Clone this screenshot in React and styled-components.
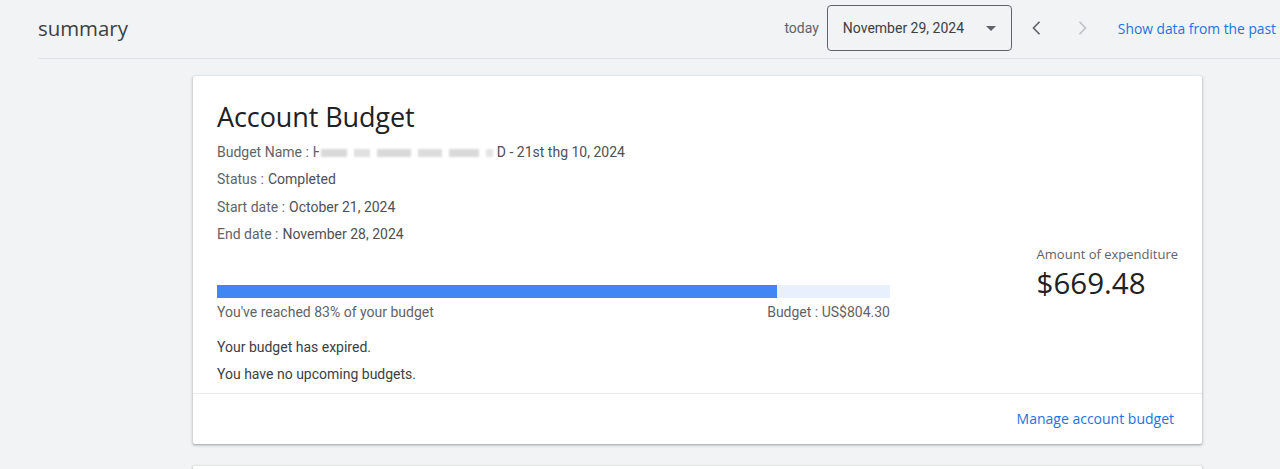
import React from "react";
import styled, { createGlobalStyle } from "styled-components";

const GlobalStyle = createGlobalStyle`
  html, body {
    margin: 0;
    padding: 0;
    background: #f1f3f4;
    font-family: Roboto, "Liberation Sans", Arial, sans-serif;
    color: #3c4043;
    overflow: hidden;
  }
  * { box-sizing: border-box; }
`;

const Page = styled.div`
  width: 1280px;
  height: 469px;
  overflow: hidden;
`;

const Header = styled.header`
  margin-left: 38px;
  height: 59px;
  border-bottom: 1px solid #dfe1e5;
  display: flex;
  align-items: center;
  white-space: nowrap;
  overflow: hidden;
`;

const PageTitle = styled.h1`
  margin: 0 0 2px;
  font-family: "Open Sans", Roboto, sans-serif;
  font-weight: 400;
  font-size: 20.4px;
  color: #3c4043;
`;

const Controls = styled.div`
  margin-left: auto;
  display: flex;
  align-items: center;
  padding-bottom: 2px;
`;

const TodayLabel = styled.span`
  font-size: 14px;
  color: #5f6368;
  margin-right: 8px;
`;

const DateSelect = styled.button`
  width: 185px;
  height: 46px;
  border: 1px solid #5f6368;
  border-radius: 4px;
  background: transparent;
  display: flex;
  align-items: center;
  padding: 0 15px;
  font-family: Roboto, sans-serif;
  font-size: 14px;
  color: #3c4043;
  cursor: pointer;
`;

const Caret = styled.span`
  margin-left: auto;
  width: 0;
  height: 0;
  border-left: 5px solid transparent;
  border-right: 5px solid transparent;
  border-top: 5px solid #5f6368;
`;

const NavButton = styled.button`
  width: 40px;
  height: 40px;
  border: none;
  background: transparent;
  display: flex;
  align-items: center;
  justify-content: center;
  padding: 0;
  margin-left: ${(p) => p.$gap || 0}px;
  color: ${(p) => (p.disabled ? "#bdc1c6" : "#5f6368")};
`;

const HeaderLink = styled.a`
  margin-left: 16px;
  font-family: "Open Sans", Roboto, sans-serif;
  font-size: 13.8px;
  color: #1a73e8;
  text-decoration: none;
  padding-right: 4px;
`;

const Content = styled.main`
  padding: 17px 78px 0 193px;
  display: flex;
  flex-direction: column;
  gap: 22px;
`;

const Card = styled.section`
  background: #fff;
  border-radius: 2px;
  box-shadow: 0 1px 2px rgba(60, 64, 67, 0.3), 0 1px 3px 1px rgba(60, 64, 67, 0.15);
  min-height: ${(p) => p.$minHeight || 0}px;
`;

const CardBody = styled.div`
  padding: 24px 24px 4px 24px;
  display: flex;
  justify-content: space-between;
`;

const MainColumn = styled.div`
  width: 673px;
`;

const CardTitle = styled.h2`
  margin: 0 0 6px;
  padding-top: 1px;
  font-family: "Open Sans", Roboto, sans-serif;
  font-weight: 400;
  font-size: 27px;
  line-height: 32px;
  letter-spacing: -0.1px;
  color: #202124;
`;

const InfoRow = styled.div`
  font-size: 14px;
  line-height: 27.3px;
  height: 27.3px;
  color: ${(p) => (p.$strong ? "#3c4043" : "#5f6368")};
  display: flex;
  align-items: center;
  white-space: nowrap;
`;

const Value = styled.span`
  color: #4d5156;
  margin-left: 4px;
`;

const Redacted = styled.span`
  display: inline-flex;
  align-items: center;
  gap: 7px;
  margin-left: 2px;
  filter: blur(1.3px);
`;

const RedactBlock = styled.span`
  display: inline-block;
  width: ${(p) => p.$w}px;
  height: 8px;
  background: ${(p) => p.$c || "#d9d9d9"};
`;

const PartialGlyph = styled.span`
  display: inline-block;
  vertical-align: top;
  width: 6px;
  overflow: hidden;
  color: #5f6368;
`;

const Bar = styled.div`
  margin-top: 37px;
  height: 13px;
  background: #e8f0fe;
`;

const BarFill = styled.div`
  height: 100%;
  background: #4285f4;
`;

const BarLabels = styled.div`
  margin-top: 4px;
  display: flex;
  justify-content: space-between;
  font-size: 14px;
  line-height: 20px;
  color: #5f6368;
`;

const Notes = styled.div`
  margin-top: 12px;
`;

const SideColumn = styled.div`
  padding-top: 144px;
`;

const SideLabel = styled.div`
  font-family: "Open Sans", Roboto, sans-serif;
  font-size: 13px;
  line-height: 20px;
  color: #5f6368;
`;

const Amount = styled.div`
  font-family: "Open Sans", Roboto, sans-serif;
  font-size: 29.5px;
  line-height: 38px;
  color: #202124;
`;

const CardFooter = styled.div`
  border-top: 1px solid #e8eaed;
  height: 51px;
  display: flex;
  align-items: center;
  justify-content: flex-end;
  padding: 0 28px 0 0;
`;

const FooterLink = styled.a`
  font-family: "Open Sans", Roboto, sans-serif;
  font-size: 14px;
  font-weight: 500;
  color: #1a73e8;
  text-decoration: none;
`;

const Chevron = ({ dir }) => (
  <svg width="20" height="20" viewBox="0 0 24 24" fill="none" stroke="currentColor" strokeWidth="2">
    {dir === "left" ? <path d="M15 4.5 7.8 12l7.2 7.5" /> : <path d="M9 4.5l7.2 7.5L9 19.5" />}
  </svg>
);

const budget = { spent: 669.48, limit: 804.3 };
const hiddenName = [
  { w: 26 },
  { w: 16, c: "#e0e0e0" },
  { w: 34 },
  { w: 24, c: "#dcdcdc" },
  { w: 30 },
  { w: 7, c: "#e4e4e4" },
];

export default function App() {
  const pct = Math.round((budget.spent / budget.limit) * 100);
  return (
    <Page>
      <GlobalStyle />
      <Header>
        <PageTitle>summary</PageTitle>
        <Controls>
          <TodayLabel>today</TodayLabel>
          <DateSelect>
            November 29, 2024
            <Caret />
          </DateSelect>
          <NavButton $gap={5} aria-label="previous">
            <Chevron dir="left" />
          </NavButton>
          <NavButton $gap={5} disabled aria-label="next">
            <Chevron dir="right" />
          </NavButton>
          <HeaderLink href="#">Show data from the past</HeaderLink>
        </Controls>
      </Header>

      <Content>
        <Card>
          <CardBody>
            <MainColumn>
              <CardTitle>Account Budget</CardTitle>
              <InfoRow>
                Budget Name :
                <Value>
                  <PartialGlyph>H</PartialGlyph>
                </Value>
                <Redacted>
                  {hiddenName.map((b, i) => (
                    <RedactBlock key={i} $w={b.w} $c={b.c} />
                  ))}
                </Redacted>
                <Value>D - 21st thg 10, 2024</Value>
              </InfoRow>
              <InfoRow>
                Status :<Value>Completed</Value>
              </InfoRow>
              <InfoRow>
                Start date :<Value>October 21, 2024</Value>
              </InfoRow>
              <InfoRow>
                End date :<Value>November 28, 2024</Value>
              </InfoRow>

              <Bar>
                <BarFill style={{ width: `${(budget.spent / budget.limit) * 100}%` }} />
              </Bar>
              <BarLabels>
                <span>You've reached {pct}% of your budget</span>
                <span>Budget : US${budget.limit.toFixed(2)}</span>
              </BarLabels>

              <Notes>
                <InfoRow $strong>Your budget has expired.</InfoRow>
                <InfoRow $strong>You have no upcoming budgets.</InfoRow>
              </Notes>
            </MainColumn>

            <SideColumn>
              <SideLabel>Amount of expenditure</SideLabel>
              <Amount>${budget.spent.toFixed(2)}</Amount>
            </SideColumn>
          </CardBody>
          <CardFooter>
            <FooterLink href="#">Manage account budget</FooterLink>
          </CardFooter>
        </Card>
        <Card $minHeight={120} />
      </Content>
    </Page>
  );
}
